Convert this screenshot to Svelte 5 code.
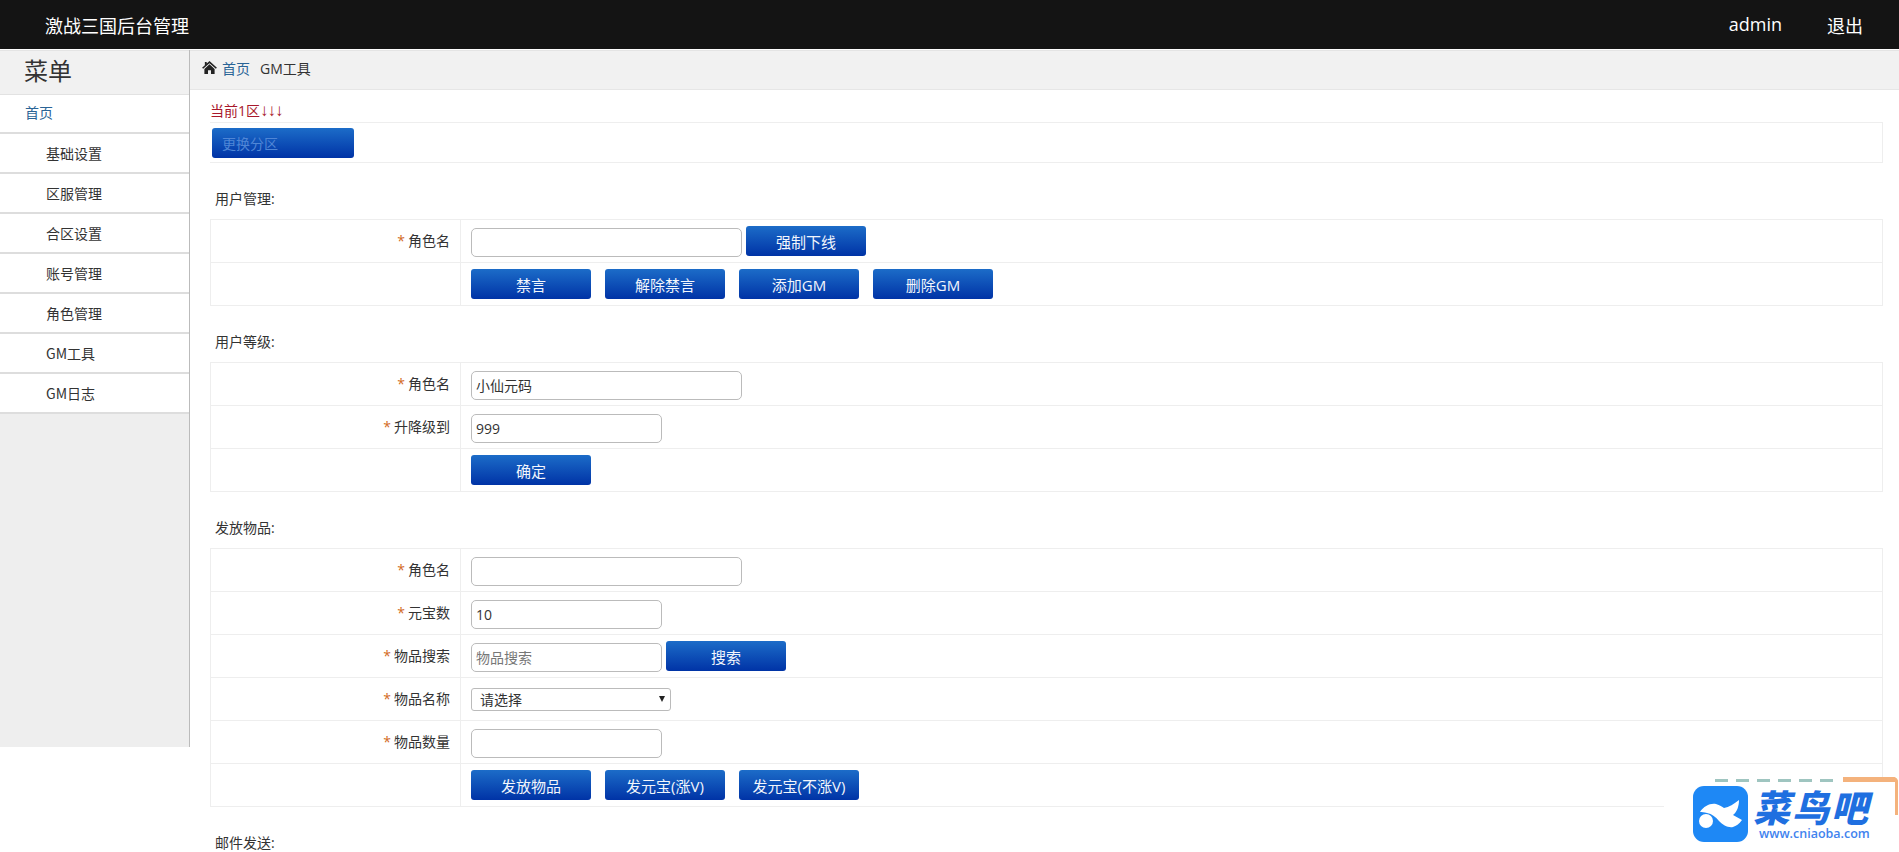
<script lang="ts">
  const menu = ['基础设置', '区服管理', '合区设置', '账号管理', '角色管理', 'GM工具', 'GM日志']
</script>

<div class="page">
  <header class="topbar">
    <span class="brand">激战三国后台管理</span>
    <nav class="user">
      <span class="admin">admin</span>
      <span>退出</span>
    </nav>
  </header>

  <div class="layout">
    <aside class="sidebar">
      <div class="side-head">菜单</div>
      <div class="side-home">首页</div>
      {#each menu as item}
        <div class="side-item">{item}</div>
      {/each}
    </aside>

    <main class="main">
      <div class="crumb">
        <svg class="home" viewBox="0 0 16 14" width="15" height="13">
          <path d="M8 0 L16 7.2 L14.8 8.4 L8 2.4 L1.2 8.4 L0 7.2 L3 4.5 V1 H5 V2.7 Z" fill="#222" />
          <path d="M8 3.6 L13.5 8.5 V14 H9.6 V10 H6.4 V14 H2.5 V8.5 Z" fill="#222" />
        </svg>
        <span class="crumb-link">首页</span>
        <span>GM工具</span>
      </div>

      <div class="content">
        <div class="zone">当前1区<span class="arrows">↓↓↓</span></div>
        <table class="zone-table">
          <tbody>
            <tr><td><button class="btn zone-btn">更换分区</button></td></tr>
          </tbody>
        </table>

        <h4>用户管理:</h4>
        <table>
          <tbody>
            <tr>
              <td class="lb"><i>*</i>角色名</td>
              <td class="val"><input class="wide" /><button class="btn after">强制下线</button></td>
            </tr>
            <tr>
              <td class="lb"></td>
              <td class="val btns"><button class="btn">禁言</button><button class="btn">解除禁言</button><button class="btn">添加GM</button><button class="btn">删除GM</button></td>
            </tr>
          </tbody>
        </table>

        <h4>用户等级:</h4>
        <table>
          <tbody>
            <tr>
              <td class="lb"><i>*</i>角色名</td>
              <td class="val"><input class="wide" value="小仙元码" /></td>
            </tr>
            <tr>
              <td class="lb"><i>*</i>升降级到</td>
              <td class="val"><input class="short" value="999" /></td>
            </tr>
            <tr>
              <td class="lb"></td>
              <td class="val btns"><button class="btn">确定</button></td>
            </tr>
          </tbody>
        </table>

        <h4>发放物品:</h4>
        <table>
          <tbody>
            <tr>
              <td class="lb"><i>*</i>角色名</td>
              <td class="val"><input class="wide" /></td>
            </tr>
            <tr>
              <td class="lb"><i>*</i>元宝数</td>
              <td class="val"><input class="short" value="10" /></td>
            </tr>
            <tr>
              <td class="lb"><i>*</i>物品搜索</td>
              <td class="val"><input class="short" placeholder="物品搜索" /><button class="btn after">搜索</button></td>
            </tr>
            <tr>
              <td class="lb"><i>*</i>物品名称</td>
              <td class="val">
                <div class="select">请选择<span class="caret"></span></div>
              </td>
            </tr>
            <tr>
              <td class="lb"><i>*</i>物品数量</td>
              <td class="val"><input class="short" /></td>
            </tr>
            <tr>
              <td class="lb"></td>
              <td class="val btns"><button class="btn">发放物品</button><button class="btn">发元宝(涨V)</button><button class="btn">发元宝(不涨V)</button></td>
            </tr>
          </tbody>
        </table>

        <h4>邮件发送:</h4>
      </div>
    </main>
  </div>

  <div class="watermark">
    <div class="wm-behind">
      <span class="dots"></span>
      <span class="orange"></span>
    </div>
    <div class="wm-box">
      <svg class="wm-icon" viewBox="0 0 55 56" width="55" height="56">
        <rect width="55" height="56" rx="11" fill="#1e88f5" />
        <path d="M7 26 C11 20 17 17 23 18 C27 19 29 21 31 22 C36 21 41 18 46 14 C46 20 44 26 40 29 L49 34 C46 38 43 40 40 41 C35 42 30 39 26 35 C23 31 19 28 14 27 C11 26 9 26 7 26 Z" fill="#fff" />
        <path d="M33 20 C36 19 38 17 40 15" stroke="#1e88f5" stroke-width="1" fill="none" />
        <circle cx="13" cy="35" r="7" fill="#fff" />
      </svg>
      <div class="wm-text">
        <div class="wm-name">菜鸟吧</div>
        <div class="wm-url">www.cniaoba.com</div>
      </div>
    </div>
  </div>
</div>

<style>
  :global(html), :global(body) {
    margin: 0;
    overflow: hidden;
  }
  .page {
    position: relative;
    height: 852px;
    overflow: hidden;
    background: #fff;
    color: #333;
    font-family: "Open Sans", "Noto Sans CJK SC", sans-serif;
    font-size: 14px;
  }

  .topbar {
    display: flex;
    align-items: center;
    justify-content: space-between;
    height: 49px;
    padding: 0 36px 0 45px;
    background: #141414;
    color: #fff;
    font-size: 18px;
  }
  .user {
    display: flex;
    gap: 45px;
  }

  .layout {
    display: flex;
    align-items: flex-start;
    padding-top: 1px;
  }

  .sidebar {
    flex: none;
    box-sizing: border-box;
    width: 190px;
    height: 697px;
    background: #eee;
    border-right: 1px solid #bbb;
    font-family: "Noto Sans CJK SC", sans-serif;
  }
  .side-head {
    box-sizing: border-box;
    height: 45px;
    padding-left: 24px;
    background: #f1f1f1;
    border-top: 1px solid #e4e4e4;
    border-bottom: 1px solid #e2e2e2;
    font-size: 24px;
    line-height: 38px;
  }
  .side-home, .side-item {
    box-sizing: border-box;
    height: 40px;
    background: #fff;
    border-bottom: 2px solid #ddd;
    line-height: 38px;
  }
  .side-home {
    height: 39px;
    padding-left: 25px;
    color: #2a6496;
    line-height: 35px;
  }
  .side-item {
    padding-left: 46px;
  }

  .main {
    flex: 1;
    min-width: 0;
  }
  .crumb {
    display: flex;
    align-items: center;
    box-sizing: border-box;
    height: 40px;
    padding: 0 0 5px 12px;
    background: #f1f1f1;
    border-top: 1px solid #e4e4e4;
    border-bottom: 1px solid #e6e6e6;
  }
  .home {
    margin-right: 5px;
  }
  .crumb-link {
    margin-right: 10px;
    color: #2a6496;
  }

  .content {
    padding: 0 16px 0 20px;
  }
  .zone {
    height: 32px;
    line-height: 41px;
    color: #a8182c;
  }
  .arrows {
    font-family: "Liberation Sans", sans-serif;
    font-size: 17px;
    font-weight: 700;
    letter-spacing: -1px;
  }
  table {
    width: 100%;
    border-collapse: collapse;
  }
  td {
    height: 42px;
    padding: 0;
    border: 1px solid #eee;
  }
  .zone-table td {
    height: 39px;
    padding-left: 2px;
    border-left: 0;
  }
  h4 {
    margin: 0;
    height: 34px;
    padding: 22px 0 0 5px;
    font-size: 14px;
    font-weight: 400;
    line-height: 28px;
  }
  .lb {
    box-sizing: border-box;
    width: 250px;
    padding: 0 10px 2px 0;
    text-align: right;
  }
  .lb i {
    margin-right: 3px;
    color: #d2691e;
    font-style: normal;
  }
  .val {
    padding-left: 10px;
    font-size: 0;
  }
  .btn {
    box-sizing: border-box;
    width: 120px;
    height: 30px;
    padding: 0;
    border: 0;
    border-radius: 3px;
    background: linear-gradient(#1c6cc8, #0033a6);
    color: #f2f6fc;
    font: inherit;
    font-size: 15px;
    vertical-align: middle;
  }
  .btns .btn + .btn {
    margin-left: 14px;
  }
  .after {
    margin-left: 4px;
  }
  .zone-btn {
    width: 142px;
    padding-left: 10px;
    color: #4f86d6;
    font-size: 14px;
    text-align: left;
  }
  input {
    box-sizing: border-box;
    height: 29px;
    margin-top: 2px;
    padding: 0 4px;
    border: 1px solid #bbb;
    border-radius: 5px;
    background: #fff;
    color: #333;
    font: inherit;
    font-size: 14px;
    vertical-align: middle;
    outline: none;
  }
  input::placeholder {
    color: #777;
  }
  .wide {
    width: 271px;
  }
  .short {
    width: 191px;
  }
  .select {
    display: inline-flex;
    align-items: center;
    justify-content: space-between;
    box-sizing: border-box;
    width: 200px;
    height: 23px;
    padding: 0 5px 0 8px;
    border: 1px solid #bbb;
    border-radius: 3px;
    font-size: 14px;
    vertical-align: middle;
  }
  .caret {
    width: 0;
    height: 0;
    border-left: 3px solid transparent;
    border-right: 3px solid transparent;
    border-top: 6px solid #222;
  }

  .watermark {
    position: absolute;
    right: 0;
    bottom: 0;
    width: 235px;
    height: 75px;
  }
  .wm-behind {
    position: absolute;
    inset: 0;
  }
  .dots {
    position: absolute;
    left: 51px;
    top: 2px;
    width: 118px;
    height: 4px;
    background: repeating-linear-gradient(90deg, #9fc5c0 0 13px, transparent 13px 21px);
  }
  .orange {
    position: absolute;
    left: 179px;
    top: 0;
    width: 50px;
    height: 33px;
    border: 5px solid #f4b27c;
    border-left: 0;
    border-bottom: 0;
    border-radius: 0 5px 0 0;
    background: #f4b27c;
  }
  .wm-box {
    position: absolute;
    left: 0;
    top: 5px;
    right: 4px;
    bottom: 0;
    display: flex;
    gap: 5px;
    padding: 4px 0 0 29px;
    background: #fff;
  }
  .wm-name {
    height: 40px;
    color: #1f6fe0;
    font-family: "Noto Sans CJK SC", sans-serif;
    font-size: 37px;
    font-weight: 900;
    font-style: italic;
    letter-spacing: 2px;
    line-height: 40px;
  }
  .wm-url {
    margin-left: 6px;
    color: #3f83ee;
    font-size: 12.5px;
    font-weight: 600;
    line-height: 15px;
  }
</style>
